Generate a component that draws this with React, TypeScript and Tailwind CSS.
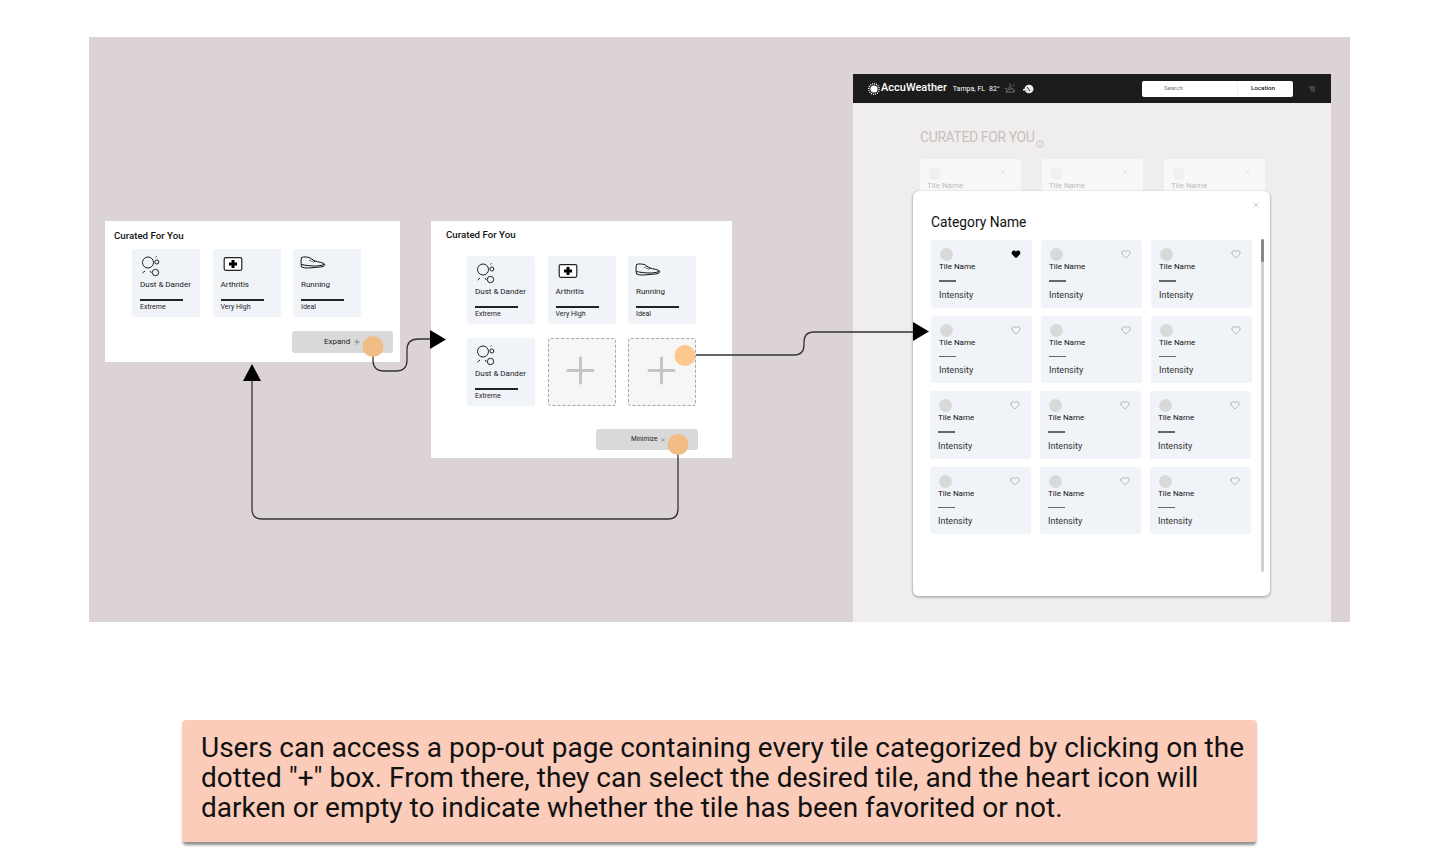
import { Heart, Plus, X } from "lucide-react";

const font = "font-['Roboto','Liberation_Sans',sans-serif]";

function DustIcon() {
	return (
		<svg width="20" height="21" viewBox="0 0 20 21" fill="none" stroke="#222" strokeWidth="1" className="ml-px">
			<circle cx="7" cy="6.5" r="5.5" />
			<circle cx="15.8" cy="6" r="2" />
			<circle cx="14.5" cy="16.5" r="3.2" />
			<path d="M14.5 1.5l1-1.2M1.5 17l2.5-2M9 15l1.5 2" />
		</svg>
	);
}

function MedIcon() {
	return (
		<svg width="20" height="14" viewBox="0 0 19 14" className="ml-[2px]">
			<rect x="0.7" y="0.7" width="17.6" height="12.6" rx="1.5" fill="#fff" stroke="#222" strokeWidth="1.2" />
			<path d="M8 3h3v2.5h2.5v3H11V11H8V8.5H5.5v-3H8z" fill="#000" />
		</svg>
	);
}

function ShoeIcon() {
	return (
		<svg width="26" height="14" viewBox="0 0 26 14" fill="none" stroke="#111" strokeWidth="1" className="-ml-px">
			<path d="M1.5 1.5C4 .5 7 1 9 1.5c2 .5 3.500 2.500 6 3.500 3 1 8 1.500 9.500 3 .5.800 0 2-1.500 2.500-4 1-6 .5-9 1-4 .5-9 1-12.500-.5C1 9 .8 4 1.500 1.500z" />
			<path d="M1.500 8.500c4 1 10 1.500 14 1.500 3 0 6-.5 8.500-1.500M11 3.500l-1.500 1.500M13 4.500l-1.500 1.500M15 5l-1.500 1.500" />
		</svg>
	);
}

function CuratedTile({ icon, name, level, top }: { icon: React.ReactNode; name: string; level: string; top: string }) {
	return (
		<div className="w-[68px] h-[68px] rounded-[3px] bg-[#f0f3f8] pl-2 flex flex-col">
			<div className={`h-[22px] ${top}`}>{icon}</div>
			<p className="mt-[8px] text-[8px] leading-[12px] text-[#222]">{name}</p>
			<div className="mt-[8px] w-[43px] h-[1.5px] bg-[#222]" />
			<p className="mt-[1.5px] text-[7px] leading-[10px] text-[#222]">{level}</p>
		</div>
	);
}

function AddTile() {
	return (
		<div className="w-[68px] h-[68px] rounded-[3px] bg-[#f6f6f6] border border-dashed border-[#a8a8a8] flex items-center justify-center">
			<Plus size={43} strokeWidth={1.7} className="-ml-[2px] -mt-1 text-[#c4c4c4]" />
		</div>
	);
}

const dust = <DustIcon />;
const med = <MedIcon />;
const shoe = <ShoeIcon />;

function TopTiles() {
	return (
		<>
			<CuratedTile icon={dust} name="Dust & Dander" level="Extreme" top="pt-[7px]" />
			<CuratedTile icon={med} name="Arthritis" level="Very High" top="pt-[8px]" />
			<CuratedTile icon={shoe} name="Running" level="Ideal" top="pt-[7px]" />
		</>
	);
}

function ModalTile({ filled }: { filled?: boolean }) {
	return (
		<div className="relative w-[101px] h-[67.5px] rounded-[3px] bg-[#f0f3f8] pl-2">
			<div className="ml-px pt-[8px]">
				<div className="w-[13px] h-[13px] rounded-full bg-[#d9d9d9]" />
			</div>
			<p className="text-[8px] leading-[12px] text-[#111]">Tile Name</p>
			<div className="mt-[7px] w-[17px] h-[1.5px] bg-[#666]" />
			<p className="mt-[7px] text-[9px] leading-[12px] text-[#333]">Intensity</p>
			<Heart
				size={10}
				strokeWidth={1}
				className={`absolute right-[11px] top-[9px] ${filled ? "text-black fill-black" : "text-[#666]"}`}
			/>
		</div>
	);
}

function FadedTile() {
	return (
		<div className="relative w-[101px] h-[40px] rounded-[3px] bg-[#f8f8fa] pl-[7px] pt-2">
			<div className="ml-px w-[13px] h-[13px] rounded-full bg-[#f1eff0]" />
			<p className="text-[8px] leading-[12px] text-[#c4b8ba]">Tile Name</p>
			<X size={8} strokeWidth={1} className="absolute right-[14px] top-[9px] text-[#c4b8ba]" />
		</div>
	);
}

function AccuWindow() {
	return (
		<div className="absolute left-[764px] top-[37px] w-[478px] h-[548px] bg-[#f0eeed] overflow-hidden">
			<div className="h-[29px] bg-[#1c1c1c] flex items-center pl-[15px] pr-4 text-white">
				<svg width="12" height="12" viewBox="0 0 12 12">
					<circle cx="6" cy="6" r="3.6" fill="#fff" />
					<circle cx="6" cy="6" r="5.2" fill="none" stroke="#fff" strokeWidth="1.400" strokeDasharray="1 1" />
				</svg>
				<span className="ml-px text-[11px] font-medium">AccuWeather</span>
				<span className="ml-[6px] mt-px text-[7px]">Tampa, FL</span>
				<span className="ml-[4px] mt-px text-[7px]">82°</span>
				<svg width="12" height="12" viewBox="0 0 12 12" fill="none" stroke="#bbb" strokeWidth="0.6" className="ml-[4px]">
					<path d="M2 9h8c1-1 .5-2.500-1-2.500C8.500 5 6.500 5 6 6.500 4 6 2.500 7 2 9zM4.500 5.500a2 2 0 0 1 3-1.500M6 .5v2M1 5l2 .8M10 1.500L8.700 3" />
				</svg>
				<svg width="12" height="10" viewBox="0 0 12 10" className="ml-[6px]">
					<ellipse cx="7" cy="5" rx="4.500" ry="4.300" fill="#eee" />
					<path d="M0 6h5M5 3l3 4" stroke="#1c1c1c" strokeWidth="1" />
					<path d="M1 5h4v1.500H1z" fill="#eee" />
				</svg>
				<div className="ml-auto w-[151px] h-4 bg-white rounded-[2px] flex items-center text-[6.2px]">
					<span className="ml-[22px] w-[73px] text-[#777]">Search</span>
					<span className="w-px h-3 bg-[#eee]" />
					<span className="ml-[13px] text-[#222] font-medium">Location</span>
				</div>
				<svg width="6" height="6" viewBox="0 0 6 6" stroke="#888" strokeWidth="0.7" className="ml-4">
					<path d="M0 1h6M1 3h5M2 5h4" />
				</svg>
			</div>
			<div className="pl-[67px] pt-[25px] flex items-end">
				<h2 className="text-[14px] tracking-[-0.4px] leading-[18px] text-[#c9bfc1]">CURATED FOR YOU</h2>
				<svg width="8" height="8" viewBox="0 0 8 8" fill="none" stroke="#b0a6a8" strokeWidth="0.600" className="ml-[2px] -mb-[2px]">
					<circle cx="4" cy="4" r="3.400" />
					<path d="M4 3.500v2.300M4 2v.8" />
				</svg>
			</div>
			<div className="ml-[67px] mt-[13px] flex gap-[21px]">
				<FadedTile />
				<FadedTile />
				<FadedTile />
			</div>
			<div className="absolute left-[60px] top-[117px] w-[357px] h-[405px] bg-white rounded-md shadow-[0_1px_2px_1px_rgba(0,0,0,0.22)] pl-[18px]">
				<X size={8} strokeWidth={1} className="absolute right-[10px] top-[10px] text-[#555]" />
				<h3 className="pt-[21px] text-[13.8px] leading-5 text-[#111]">Category Name</h3>
				<div className="mt-[8px] flex flex-col gap-[8px]">
					{[0, 1, 2, 3].map((row) => (
						<div key={row} className={`flex gap-[9px] ${row > 1 ? "-ml-px" : ""}`}>
							<ModalTile filled={row === 0} />
							<ModalTile />
							<ModalTile />
						</div>
					))}
				</div>
				<div className="absolute left-[348px] top-[48px] w-[3px] h-[333px] rounded-full bg-[#cfcfcf]">
					<div className="w-[3px] h-[23px] rounded-full bg-[#888]" />
				</div>
			</div>
		</div>
	);
}

function Connectors() {
	return (
		<svg width="1261" height="585" viewBox="89 37 1261 585" className="absolute left-0 top-0" fill="none">
			<g stroke="#333" strokeWidth="1.300">
				<path d="M373 356v4q0 11 11 11h12q11 0 11-11v-10q0-11 11-11h14" />
				<path d="M696 355h98q10 0 10-10v-3q0-10 10-10h100" />
				<path d="M678 452v57q0 10-10 10H262q-10 0-10-10V380" />
			</g>
			<path d="M430 330l16 9.500-16 9.500z" fill="#000" />
			<path d="M913 322l16 9.500-16 9.500z" fill="#000" />
			<path d="M243 381l9-17 9 17z" fill="#000" />
			<circle cx="373" cy="346.500" r="10.500" fill="#f0bd84" />
			<circle cx="685" cy="355.500" r="10.500" fill="#fdc88e" />
			<circle cx="678" cy="444.500" r="10.500" fill="#f2bd84" />
		</svg>
	);
}

export default function App() {
	return (
		<div className={`w-[1440px] h-[850px] bg-white pt-[37px] overflow-hidden ${font}`}>
			<div className="relative ml-[89px] w-[1261px] h-[585px] bg-[#dcd3d4]">
				<div className="absolute left-[16px] top-[184px] w-[295px] h-[141px] bg-white">
					<h2 className="pl-[9px] pt-[9px] text-[9.700px] leading-3 font-medium text-[#111]">Curated For You</h2>
					<div className="ml-[27px] mt-[7px] flex gap-[12.500px]">
						<TopTiles />
					</div>
					<div className="absolute right-[7px] top-[110px] w-[101px] h-[22px] rounded-[3px] bg-[#d9d9d9] flex items-center pl-[32px] text-[8px] text-[#222]">
						Expand
						<Plus size={8} strokeWidth={1.2} className="ml-[3px]" />
					</div>
				</div>

				<div className="absolute left-[342px] top-[184px] w-[301px] h-[237px] bg-white">
					<h2 className="pl-[15px] pt-[8px] text-[9.700px] leading-3 font-medium text-[#111]">Curated For You</h2>
					<div className="ml-[36px] mt-[15px] grid grid-cols-[repeat(3,68px)] gap-x-[12.500px] gap-y-[14px]">
						<TopTiles />
						<CuratedTile icon={dust} name="Dust & Dander" level="Extreme" top="pt-[7px]" />
						<AddTile />
						<AddTile />
					</div>
					<div className="absolute left-[165px] top-[208px] w-[102px] h-[21px] rounded-[3px] bg-[#d9d9d9] flex items-center pl-[35px] text-[6.500px] text-[#222]">
						Minimize
						<X size={6} strokeWidth={1.2} className="ml-[3px]" />
					</div>
				</div>

				<AccuWindow />
				<Connectors />
			</div>

			<div className="ml-[182px] mt-[98px] w-[1075px] h-[122px] rounded-[4px] bg-[#fbccba] shadow-[0_4px_3px_-1px_rgba(0,0,0,0.45)] pl-[19px] pt-[13px] text-[28px] leading-[30px] text-[#111]">
				<p className="whitespace-nowrap">Users can access a pop-out page containing every tile categorized by clicking on the</p>
				<p className="whitespace-nowrap">dotted "+" box. From there, they can select the desired tile, and the heart icon will</p>
				<p className="whitespace-nowrap">darken or empty to indicate whether the tile has been favorited or not.</p>
			</div>
		</div>
	);
}
